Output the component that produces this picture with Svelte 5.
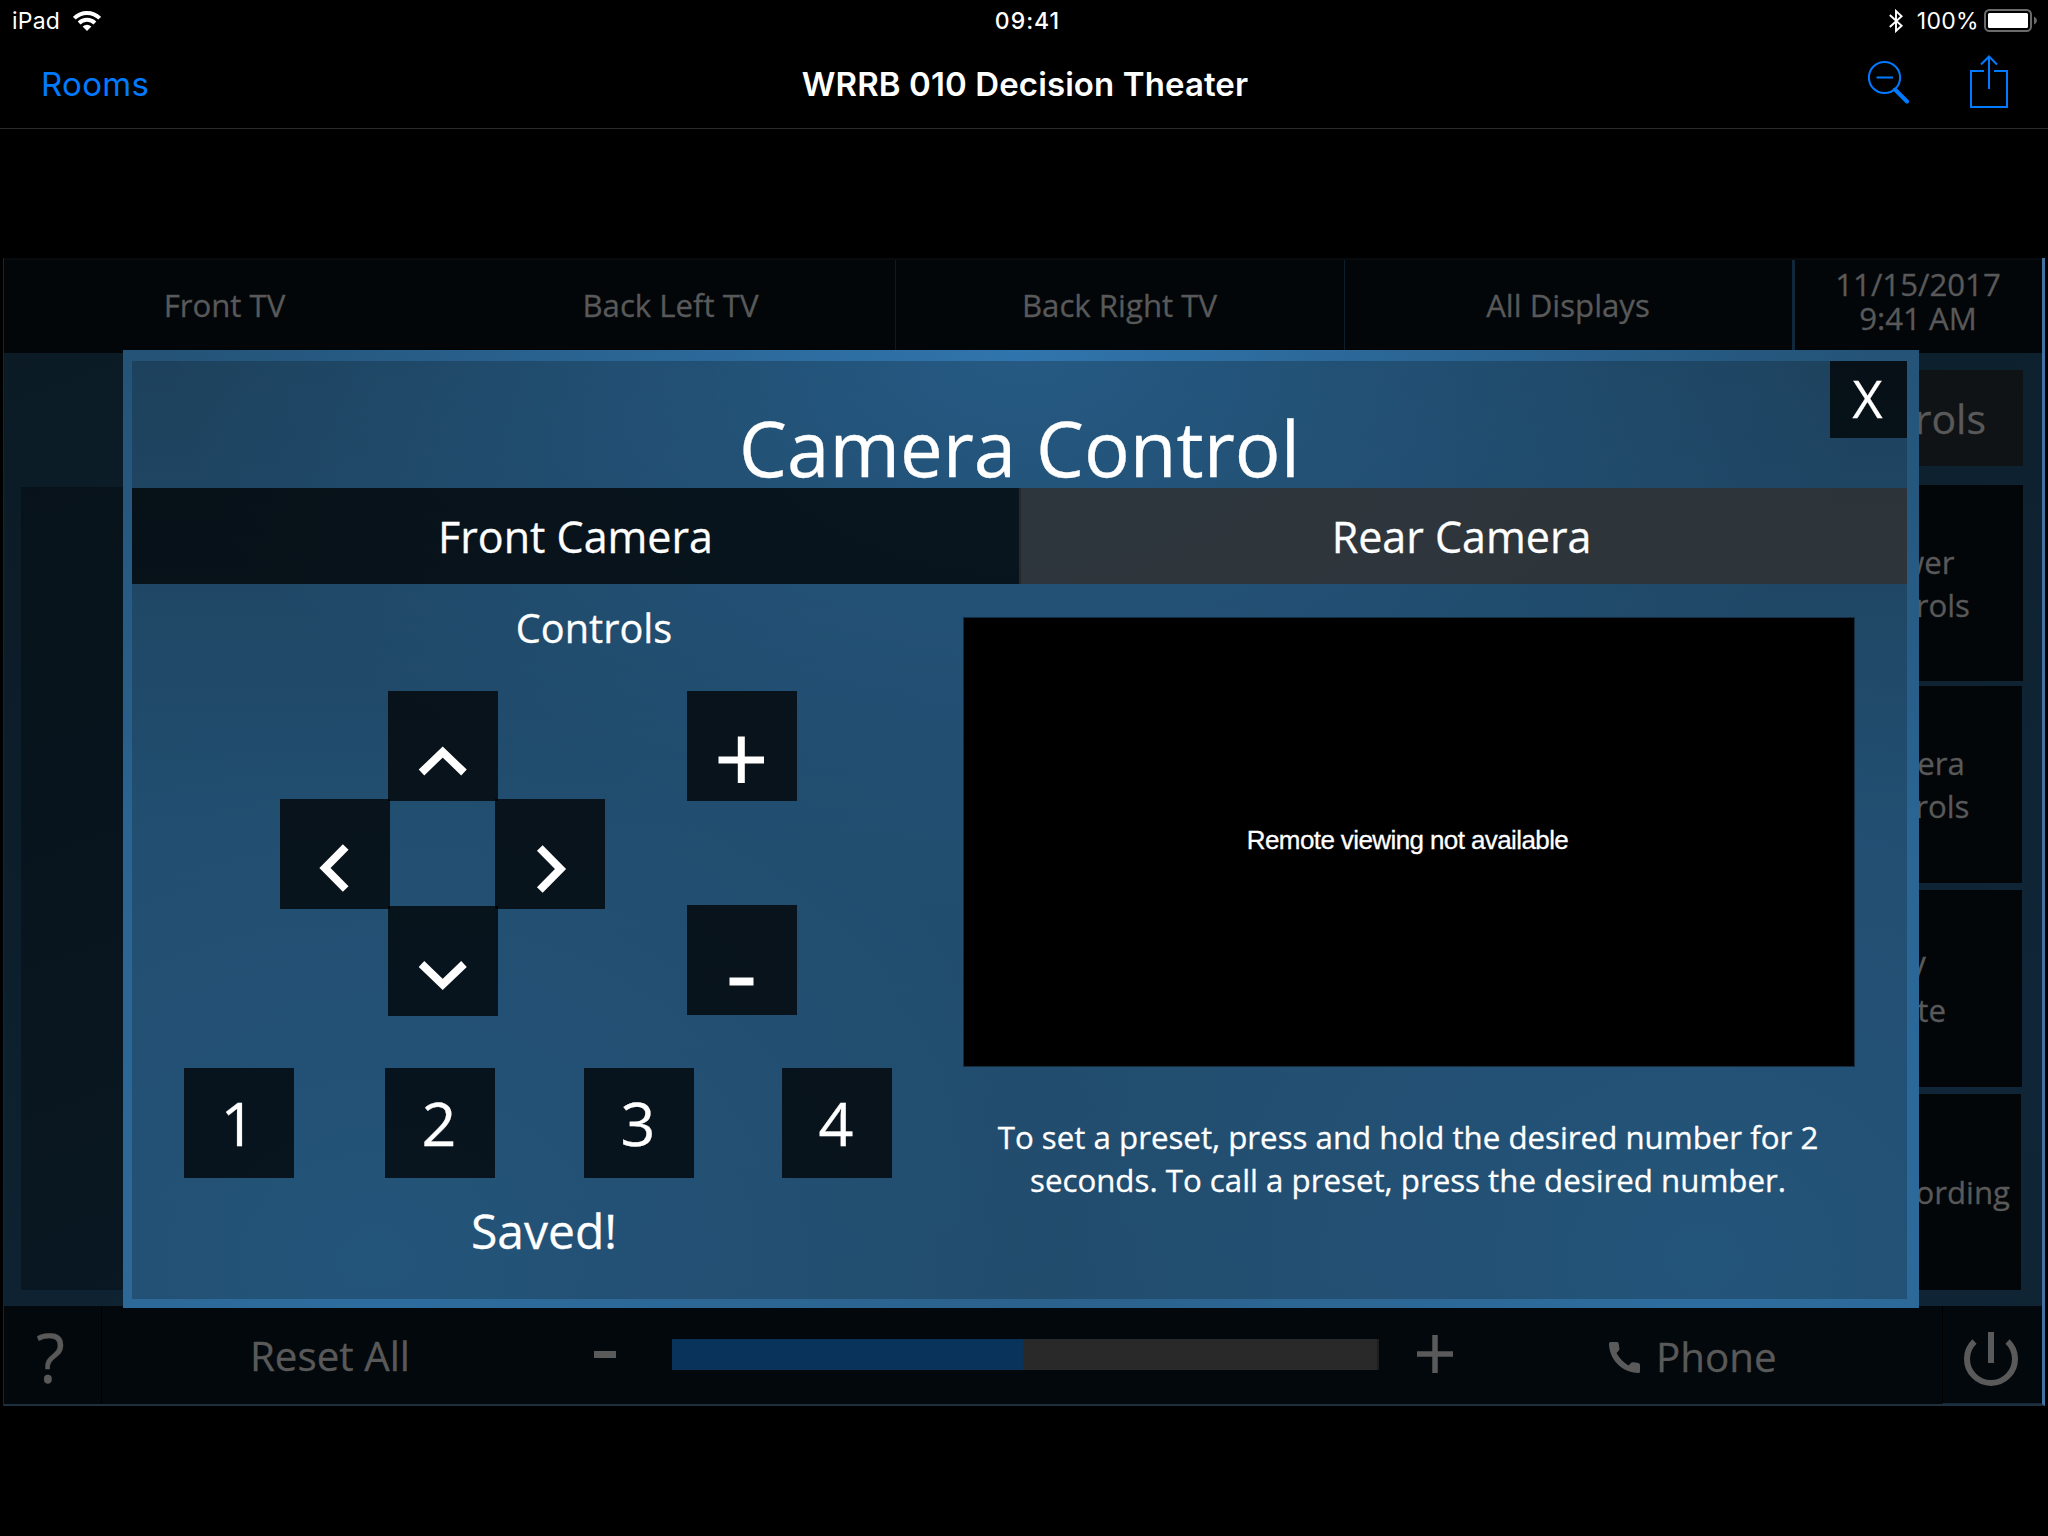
<script>
  const displays = ['Front TV', 'Back Left TV', 'Back Right TV', 'All Displays'];
  const side = [
    ['power', 'Power', 'Controls'],
    ['camera', 'Camera', 'Controls'],
    ['mute', 'TV', 'Mute'],
    ['recording', 'Recording']
  ];
  const arrows = [
    ['up', 'M33.5 81.5L54.7 61L76 81.5'],
    ['left', 'M65.7 48L45 69L65.7 90'],
    ['right', 'M44.8 49L65.5 70L44.8 91'],
    ['down', 'M33.5 58L54.7 78.5L76 58']
  ];
  const presets = [1, 2, 3, 4];
  let volume = $state(49.8);
</script>

<div class="screen">
  <div class="status">
    <div class="carrier">
      <span class="t-ipad">iPad</span>
      <svg width="28" height="20" viewBox="0 0 28 20" fill="none" stroke="#fff" stroke-width="3.9">
        <path d="M1.3 7.2A18 18 0 0 1 26.7 7.2" />
        <path d="M6.1 12A11.4 11.4 0 0 1 21.9 12" />
        <path d="M14 20L9.600 15.600Q14 12 18.400 15.600Z" fill="#fff" stroke="none" />
      </svg>
    </div>
    <span class="time">09:41</span>
    <div class="power-info">
      <svg class="bt" width="14" height="24" viewBox="0 0 14 24" fill="none" stroke="#fff" stroke-width="1.9"><path d="M.8 6L12.600 16.800L7 22V2L12.600 7.200L.8 18" /></svg>
      <span class="t-pct">100%</span>
      <svg class="batt" width="54" height="24" viewBox="0 0 54 24">
        <rect x="1" y="1" width="46" height="21" rx="4.5" fill="none" stroke="#6b6b6b" stroke-width="2" />
        <rect x="4" y="4" width="40" height="15" rx="1.5" fill="#fff" />
        <path d="M50 7.500Q53 9 53 11.500T50 15.500Z" fill="#6b6b6b" />
      </svg>
    </div>
  </div>
  <div class="nav">
    <span class="rooms">Rooms</span>
    <h1>WRRB 010 Decision Theater</h1>
    <div class="actions">
      <svg width="42" height="44" viewBox="0 0 42 44" fill="none" stroke="#007aff" stroke-width="2"><circle cx="16.500" cy="17.500" r="15.600" /><path d="M8.500 17.500H25" /><path d="M27 29.500L39 41.500" stroke-width="4" stroke-linecap="round" /></svg>
      <svg width="40" height="54" viewBox="0 0 40 54" fill="none" stroke="#007aff" stroke-width="2"><path d="M15 16H2V52H38V16H25M20 34V2M12 9.500L20 1.500L28 9.500" /></svg>
    </div>
  </div>

  <div class="panel">
    <div class="topbar">
      {#each displays as d}<div class="disp"><span>{d}</span></div>{/each}
      <div class="clock"><span>11/15/2017</span><span>9:41 AM</span></div>
    </div>
    <div class="body">
      <div class="source"></div>
      <div class="side">
        <div class="head">Controls</div>
        {#each side as [id, ...lines]}
          <div class="card {id}">{#each lines as l}<span>{l}</span>{/each}</div>
        {/each}
      </div>
    </div>
    <div class="bottom">
      <div class="help"><span>?</span></div>
      <span class="reset">Reset All</span>
      <i class="minus"></i>
      <div class="slider"><div style="width:{volume}%"></div></div>
      <svg class="plus" width="36" height="38" viewBox="0 0 36 38" stroke="#5a5a5a"><path d="M0 19H36" stroke-width="5.500" /><path d="M18 0V38" stroke-width="5.500" /></svg>
      <div class="phone">
        <svg width="31" height="31" viewBox="0 0 31 31" fill="#5a5a5a"><path d="M1.500 0H8Q9.500 0 9.700 1.500L10.500 7Q10.500 8.500 7.500 11Q12 19 19.500 23.500L22.500 20.500Q23.500 20 25 20.200L29.500 21Q31 21.300 31 23V29.500Q31 31 29.500 31C13 31 0 17 0 1.500Q0 0 1.500 0Z" /></svg>
        <span>Phone</span>
      </div>
      <div class="off">
        <svg width="56" height="56" viewBox="0 0 56 56" fill="none" stroke="#5a5a5a" stroke-width="6"><path d="M11.500 9.500A24 24 0 1 0 44.500 9.500" /><path d="M28 0V31" /></svg>
      </div>
    </div>
  </div>

  <div class="modal">
    <div class="inner">
      <div class="title"><h2>Camera Control</h2><button class="close">X</button></div>
      <div class="tabs">
        <div class="tab active"><span>Front Camera</span></div>
        <div class="tab"><span>Rear Camera</span></div>
      </div>
      <div class="content">
        <div class="controls">
          <div class="lbl"><span>Controls</span></div>
          <div class="pads">
            <div class="dpad">
              {#each arrows as [name, d]}
                <button class={name} aria-label={name}><svg width="110" height="110" viewBox="0 0 110 110" fill="none" stroke="#fff" stroke-width="8"><path {d} /></svg></button>
              {/each}
            </div>
            <div class="zoom">
              <button aria-label="Zoom in"><svg width="110" height="110" viewBox="0 0 110 110" stroke="#fff" stroke-width="7"><path d="M31.500 69H77M54.300 45.500V92" /></svg></button>
              <button aria-label="Zoom out"><svg width="110" height="110" viewBox="0 0 110 110" stroke="#fff" stroke-width="8"><path d="M42.500 76.500H66.500" /></svg></button>
            </div>
          </div>
          <div class="presets">
            {#each presets as p}<button><span>{p}</span></button>{/each}
          </div>
          <div class="saved"><span>Saved!</span></div>
        </div>
        <div class="view">
          <div class="video"><span>Remote viewing not available</span></div>
          <p><span>To set a preset, press and hold the desired number for 2</span><br /><span>seconds. To call a preset, press the desired number.</span></p>
        </div>
      </div>
    </div>
  </div>
</div>

<style>
  :global(body) { background: #000; }
  * { box-sizing: border-box; }
  .screen { position: relative; width: 2048px; height: 1536px; background: #000; color: #fff; font-family: "Open Sans", "Noto Sans", sans-serif; overflow: hidden; display: flex; flex-direction: column; }
  h1, h2, p { margin: 0; font-weight: 400; }
  button { border: 0; padding: 0; color: #fff; font-family: inherit; background: rgba(0, 0, 0, 0.75); display: flex; align-items: center; justify-content: center; }
  svg { display: block; flex: none; }
  span { white-space: nowrap; }

  .status { height: 40px; display: grid; grid-template-columns: 1fr auto 1fr; align-items: center; padding: 1px 10px 0 12px; font: 23px/40px Inter, sans-serif; }
  .carrier { display: flex; align-items: center; gap: 13px; }
  .t-ipad { letter-spacing: 0.2px; }
  .time { font-weight: 500; letter-spacing: 1px; padding-left: 5px; }
  .power-info { display: flex; align-items: center; justify-content: flex-end; }
  .bt { margin-right: 14px; }
  .t-pct { margin-right: 5px; letter-spacing: 0.3px; }
  .nav { height: 89px; display: grid; grid-template-columns: 1fr auto 1fr; align-items: center; padding: 0 39px 0 41px; border-bottom: 1px solid #2c2c2c; font: 33px/89px Inter, sans-serif; }
  .rooms { color: #007aff; letter-spacing: 0.3px; }
  h1 { font-size: 33px; font-weight: 600; letter-spacing: 0.1px; }
  .actions { display: flex; gap: 59px; align-items: center; justify-content: flex-end; padding-bottom: 5px; }

  .panel { margin: 129px 3px 0; width: 2042px; height: 1148px; display: flex; flex-direction: column; color: #595959; background: linear-gradient(160deg, #0b1a25, #0c1e2a 30%, #102638 80%, #0f2332); border-right: 3px solid #4472a0; border-bottom: 2px solid #1e2f3d; border-left: 1px solid #1f2429; -webkit-text-stroke: 0.3px; }
  .topbar { height: 95px; display: flex; background: #020609; font-size: 31.2px; border-top: 2px solid #080b0d; }
  .disp { width: 449px; display: flex; align-items: center; justify-content: center; border-right: 1px solid #0d1d29; padding: 0 1px 4px 0; }
  .disp:first-child { width: 443px; border-color: transparent; }
  .disp:nth-child(2) { border-color: #0d1a24; }
  .disp:nth-child(4) { width: 450px; border-right: 3px solid #10283a; }
  .clock { flex: 1; display: flex; flex-direction: column; align-items: center; padding: 7px 1px 0 0; line-height: 34px; }
  .body { height: 953px; display: flex; justify-content: space-between; padding: 17px 19px 16px 17px; }
  .source { width: 1400px; margin-top: 117px; background: rgba(0, 0, 0, 0.3); }
  .side { width: 228px; display: flex; flex-direction: column; }
  .head { height: 96px; margin-bottom: 19px; display: flex; align-items: center; justify-content: flex-end; padding-right: 37px; background: #101315; font-size: 41px; }
  .card { height: 196px; margin: 0 1px 5px 0; background: #020609; display: flex; flex-direction: column; align-items: center; justify-content: center; font-size: 31.2px; line-height: 43px; padding-top: 1px; }
  .card.power { margin-right: 0; padding-right: 1px; }
  .card.camera, .card.mute { margin: 0 1px 7px 0; height: 197px; padding-right: 1px; }
  .card.recording { margin: 0 2px 0 0; align-items: flex-end; padding-right: 11px; }
  .bottom { height: 98px; display: flex; align-items: center; background: #02080b; font-size: 40.3px; }
  .help { width: 98px; height: 98px; display: flex; align-items: center; justify-content: center; border-right: 1px solid #000; font-size: 67px; padding: 3px 4px 0 0; }
  .reset { width: 160px; margin-left: 148px; }
  .minus { width: 22px; height: 7px; background: #5a5a5a; margin: 0 0 2px 184px; }
  .slider { width: 707px; height: 31px; margin: 0 0 2px 56px; background: #292929; border-right: 2px solid #1e1e1e; }
  .slider div { height: 100%; background: #0a335c; }
  .plus { margin: 0 0 2px 38px; }
  .phone { display: flex; align-items: center; gap: 16px; margin-left: 156px; padding-top: 2px; }
  .phone svg { margin-top: 2px; }
  .off { width: 100px; height: 98px; display: flex; align-items: center; justify-content: center; border-left: 1px solid #000; border-bottom: 1px solid #14283a; margin-left: auto; padding: 11px 3px 0 0; }

  .modal { position: absolute; left: 123px; top: 350px; width: 1796px; height: 958px; padding: 11px 12px 9px 9px; -webkit-text-stroke: 0.3px;
    background: radial-gradient(ellipse 850px 520px at 50% 0, #3075ad, rgba(48, 117, 173, 0) 100%), radial-gradient(ellipse 700px 560px at 14% 95%, #2d6d9f, rgba(45, 109, 159, 0)), radial-gradient(ellipse 700px 600px at 88% 95%, #2d6d9f, rgba(45, 109, 159, 0)), linear-gradient(#245377, #2a6390 50%, #2b618c); }
  .inner { width: 1775px; height: 938px; background: rgba(10, 20, 24, 0.27); display: flex; flex-direction: column; }
  .title { height: 127px; display: grid; grid-template-columns: 77px 1fr 77px; }
  h2 { grid-column: 2; text-align: center; font-size: 76.2px; line-height: 106px; padding-top: 34px; height: 127px; }
  .close { height: 77px; font-size: 52px; padding: 0 2px 5px 0; }
  .tabs { height: 96px; display: grid; grid-template-columns: 887px 888px; }
  .tab { display: flex; align-items: center; justify-content: center; font-size: 43px; background: rgba(48, 49, 50, 0.85); border-left: 2px solid #28292c; padding-right: 5px; }
  .tab.active { background: rgba(0, 0, 0, 0.75); border: 0; padding: 0; }
  .content { flex: 1; display: flex; }
  .controls { width: 832px; display: flex; flex-direction: column; }
  .lbl { height: 107px; padding: 18px 0 0 92px; text-align: center; font-size: 39.7px; line-height: 53px; }
  .pads { display: flex; padding-left: 148px; height: 377px; gap: 82px; }
  .dpad { width: 325px; height: 325px; display: grid; grid-template-columns: 108px 107px 110px; grid-template-rows: 108px 107px 110px; }
  .dpad button, .zoom button, .presets button { width: 110px; height: 110px; }
  .up { grid-area: 1 / 2; }
  .left { grid-area: 2 / 1; }
  .right { grid-area: 2 / 3; }
  .down { grid-area: 3 / 2; }
  .zoom { display: flex; flex-direction: column; gap: 104px; }
  .presets { display: flex; padding-left: 52px; gap: 90px; }
  .presets button { font-size: 61px; padding: 0 2px 1px 0; }
  .presets button:nth-child(2) { margin-left: 1px; }
  .presets button:nth-child(3) { margin-left: -1px; }
  .presets button:nth-child(4) { margin-left: -2px; }
  .saved { padding: 20px 8px 0 0; text-align: center; font-size: 48px; line-height: 66px; }
  .view { padding-top: 34px; width: 890px; }
  .video { height: 448px; background: #000; outline: 1px solid #122c40; display: flex; align-items: center; justify-content: center; font: 26px "Liberation Sans", sans-serif; letter-spacing: -0.6px; padding: 0 3px 4px 0; }
  p { text-align: center; font-size: 31.25px; line-height: 43px; padding: 50px 2px 0 0; }
</style>
